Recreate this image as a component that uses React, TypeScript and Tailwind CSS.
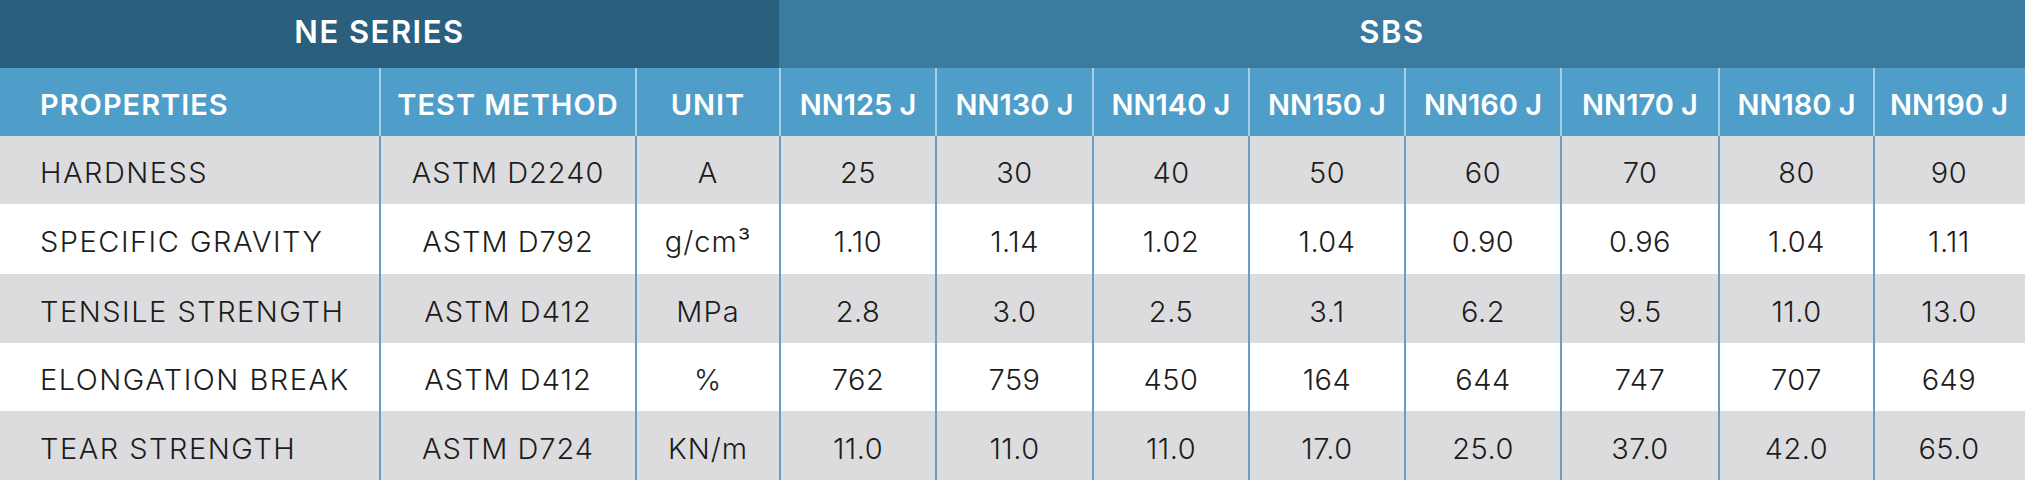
import React from "react";

const cols = "grid-cols-[379px_256px_144px_156px_157px_156px_156px_156px_158px_155px_150px]";

const models = ["NN125 J", "NN130 J", "NN140 J", "NN150 J", "NN160 J", "NN170 J", "NN180 J", "NN190 J"];

type Row = { name: string; method: string; unit: React.ReactNode; vals: string[]; h: string };

const rows: Row[] = [
  { name: "HARDNESS", method: "ASTM D2240", unit: "A", vals: ["25", "30", "40", "50", "60", "70", "80", "90"], h: "h-[68px]" },
  { name: "SPECIFIC GRAVITY", method: "ASTM D792", unit: <>g/cm³</>, vals: ["1.10", "1.14", "1.02", "1.04", "0.90", "0.96", "1.04", "1.11"], h: "h-[70px]" },
  { name: "TENSILE STRENGTH", method: "ASTM D412", unit: "MPa", vals: ["2.8", "3.0", "2.5", "3.1", "6.2", "9.5", "11.0", "13.0"], h: "h-[69px]" },
  { name: "ELONGATION BREAK", method: "ASTM D412", unit: "%", vals: ["762", "759", "450", "164", "644", "747", "707", "649"], h: "h-[68px]" },
  { name: "TEAR STRENGTH", method: "ASTM D724", unit: "KN/m", vals: ["11.0", "11.0", "11.0", "17.0", "25.0", "37.0", "42.0", "65.0"], h: "h-[69px]" },
];

export default function App() {
  return (
    <div className="w-[2027px] h-[480px] bg-white overflow-hidden font-['Inter',sans-serif]">
      <div className="w-[2025px]">
        {/* Top band */}
        <div className="flex h-[68px] text-white font-semibold text-[31px] tracking-[1.5px]">
          <div className="w-[779px] bg-[#2a5f7e] flex items-center justify-center pb-[4px] pr-[20px]">NE SERIES</div>
          <div className="flex-1 bg-[#3a7b9f] flex items-center justify-center pb-[4px] pr-[20px]">SBS</div>
        </div>
        {/* Header row */}
        <div className={`grid ${cols} h-[68px] bg-[#4e9ec9] text-white font-semibold text-[29px]`}>
          <div className="flex items-center pl-[40px] pt-[6px] tracking-[1px]">PROPERTIES</div>
          <div className="flex items-center justify-center border-l-2 border-[#a9cde4] pt-[6px] tracking-[1px]">TEST METHOD</div>
          <div className="flex items-center justify-center border-l-2 border-[#a9cde4] pt-[6px] tracking-[1px]">UNIT</div>
          {models.map((m) => (
            <div key={m} className="flex items-center justify-center border-l-2 border-[#a9cde4] pt-[6px]">
              {m}
            </div>
          ))}
        </div>
        {/* Body */}
        {rows.map((r, i) => (
          <div
            key={r.name}
            className={`grid ${cols} ${r.h} ${i % 2 === 0 ? "bg-[#dcdcde]" : "bg-white"} text-[#1c1c1c] font-light text-[29px]`}
          >
            <div className="flex items-center pl-[40px] pt-[6px] tracking-[1.5px]">{r.name}</div>
            <div className="flex items-center justify-center border-l-2 border-[#6b9dc2] pt-[6px] tracking-[1px]">{r.method}</div>
            <div className="flex items-center justify-center border-l-2 border-[#6b9dc2] pt-[6px] tracking-[1px]">{r.unit}</div>
            {r.vals.map((v, j) => (
              <div key={j} className="flex items-center justify-center border-l-2 border-[#6b9dc2] pt-[6px] tracking-[0.5px]">
                {v}
              </div>
            ))}
          </div>
        ))}
      </div>
    </div>
  );
}
